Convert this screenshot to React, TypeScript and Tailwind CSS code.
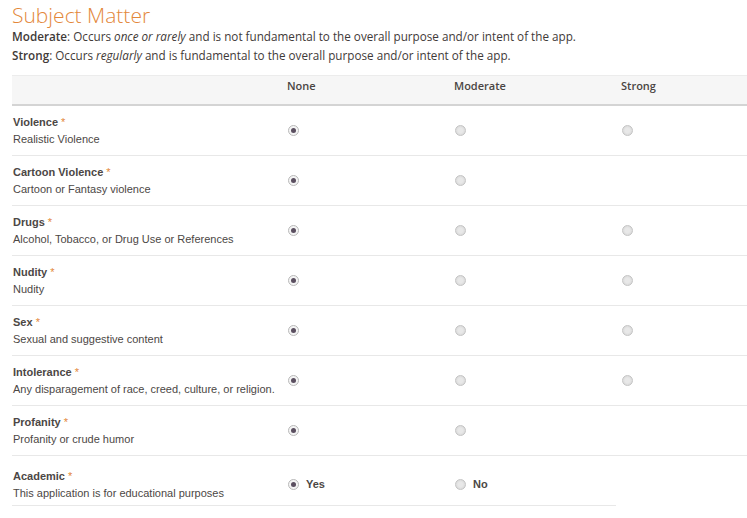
import React from 'react';

type Row = {
  title: string;
  desc: string;
  strong: boolean;
};

const rows: Row[] = [
  { title: 'Violence', desc: 'Realistic Violence', strong: true },
  { title: 'Cartoon Violence', desc: 'Cartoon or Fantasy violence', strong: false },
  { title: 'Drugs', desc: 'Alcohol, Tobacco, or Drug Use or References', strong: true },
  { title: 'Nudity', desc: 'Nudity', strong: true },
  { title: 'Sex', desc: 'Sexual and suggestive content', strong: true },
  { title: 'Intolerance', desc: 'Any disparagement of race, creed, culture, or religion.', strong: true },
  { title: 'Profanity', desc: 'Profanity or crude humor', strong: false },
];

function Radio({ checked }: { checked?: boolean }) {
  if (checked) {
    return (
      <span className="ml-px flex h-[11px] w-[11px] shrink-0 items-center justify-center rounded-full border border-[#b9b9b9] bg-[#f4f4f4]">
        <span className="h-[5px] w-[5px] rounded-full bg-[#5b4f60]" />
      </span>
    );
  }
  return (
    <span className="ml-px block h-[11px] w-[11px] shrink-0 rounded-full border border-[#c4c4c4] bg-[radial-gradient(circle,#e8e8e8_35%,#d2d2d2_100%)]" />
  );
}

function Label({ title, desc }: { title: string; desc: string }) {
  return (
    <div className="flex w-[269px] shrink-0 flex-col pl-px leading-[17px]">
      <span className="font-bold">
        {title} <span className="font-normal text-[#e3873a]">*</span>
      </span>
      <span>{desc}</span>
    </div>
  );
}

export default function App() {
  return (
    <div className="min-h-[518px] overflow-hidden bg-white pl-3 pt-[3px] text-[#4c4745]">
      <h1 className="font-['Open_Sans',sans-serif] text-[21px] font-light leading-[24px] text-[#e3873a]">
        Subject Matter
      </h1>
      <div className="font-['Open_Sans',sans-serif] text-[11.7px] leading-[19px] text-[#3f3a38]">
        <p>
          <span className="font-semibold">Moderate</span>: Occurs <i>once or rarely</i> and is not fundamental to the
          overall purpose and/or intent of the app.
        </p>
        <p>
          <span className="font-semibold">Strong</span>: Occurs <i>regularly</i> and is fundamental to the overall
          purpose and/or intent of the app.
        </p>
      </div>

      <div className="mt-[10px] w-[800px] font-['Liberation_Sans',Arial,sans-serif] text-[11px]">
        <div className="flex h-[31px] items-start border-t border-b-2 border-t-[#ececec] border-b-[#d4d4d4] bg-[#f6f6f6] pt-[2px] font-['Open_Sans',sans-serif] text-[11px] font-semibold leading-[15px] text-[#4a4543]">
          <div className="w-[269px] shrink-0" />
          <div className="w-[167px] shrink-0 px-1.5">None</div>
          <div className="w-[167px] shrink-0 px-1.5">Moderate</div>
          <div className="w-[167px] shrink-0 px-1.5">Strong</div>
        </div>

        {rows.map((r) => (
          <div key={r.title} className="flex h-[50px] items-center border-b border-[#e8e8e8]">
            <Label title={r.title} desc={r.desc} />
            <div className="w-[167px] shrink-0 px-1.5">
              <Radio checked />
            </div>
            <div className="w-[167px] shrink-0 px-1.5">
              <Radio />
            </div>
            <div className="w-[167px] shrink-0 px-1.5">{r.strong && <Radio />}</div>
          </div>
        ))}

        <div className="flex h-[50px] w-[604px] items-center border-b border-[#e8e8e8] pt-2">
          <Label title="Academic" desc="This application is for educational purposes" />
          <div className="flex w-[167px] shrink-0 items-center gap-[7px] px-1.5 font-bold">
            <Radio checked />
            Yes
          </div>
          <div className="flex w-[168px] shrink-0 items-center gap-[7px] px-1.5 font-bold">
            <Radio />
            No
          </div>
        </div>
      </div>
    </div>
  );
}
